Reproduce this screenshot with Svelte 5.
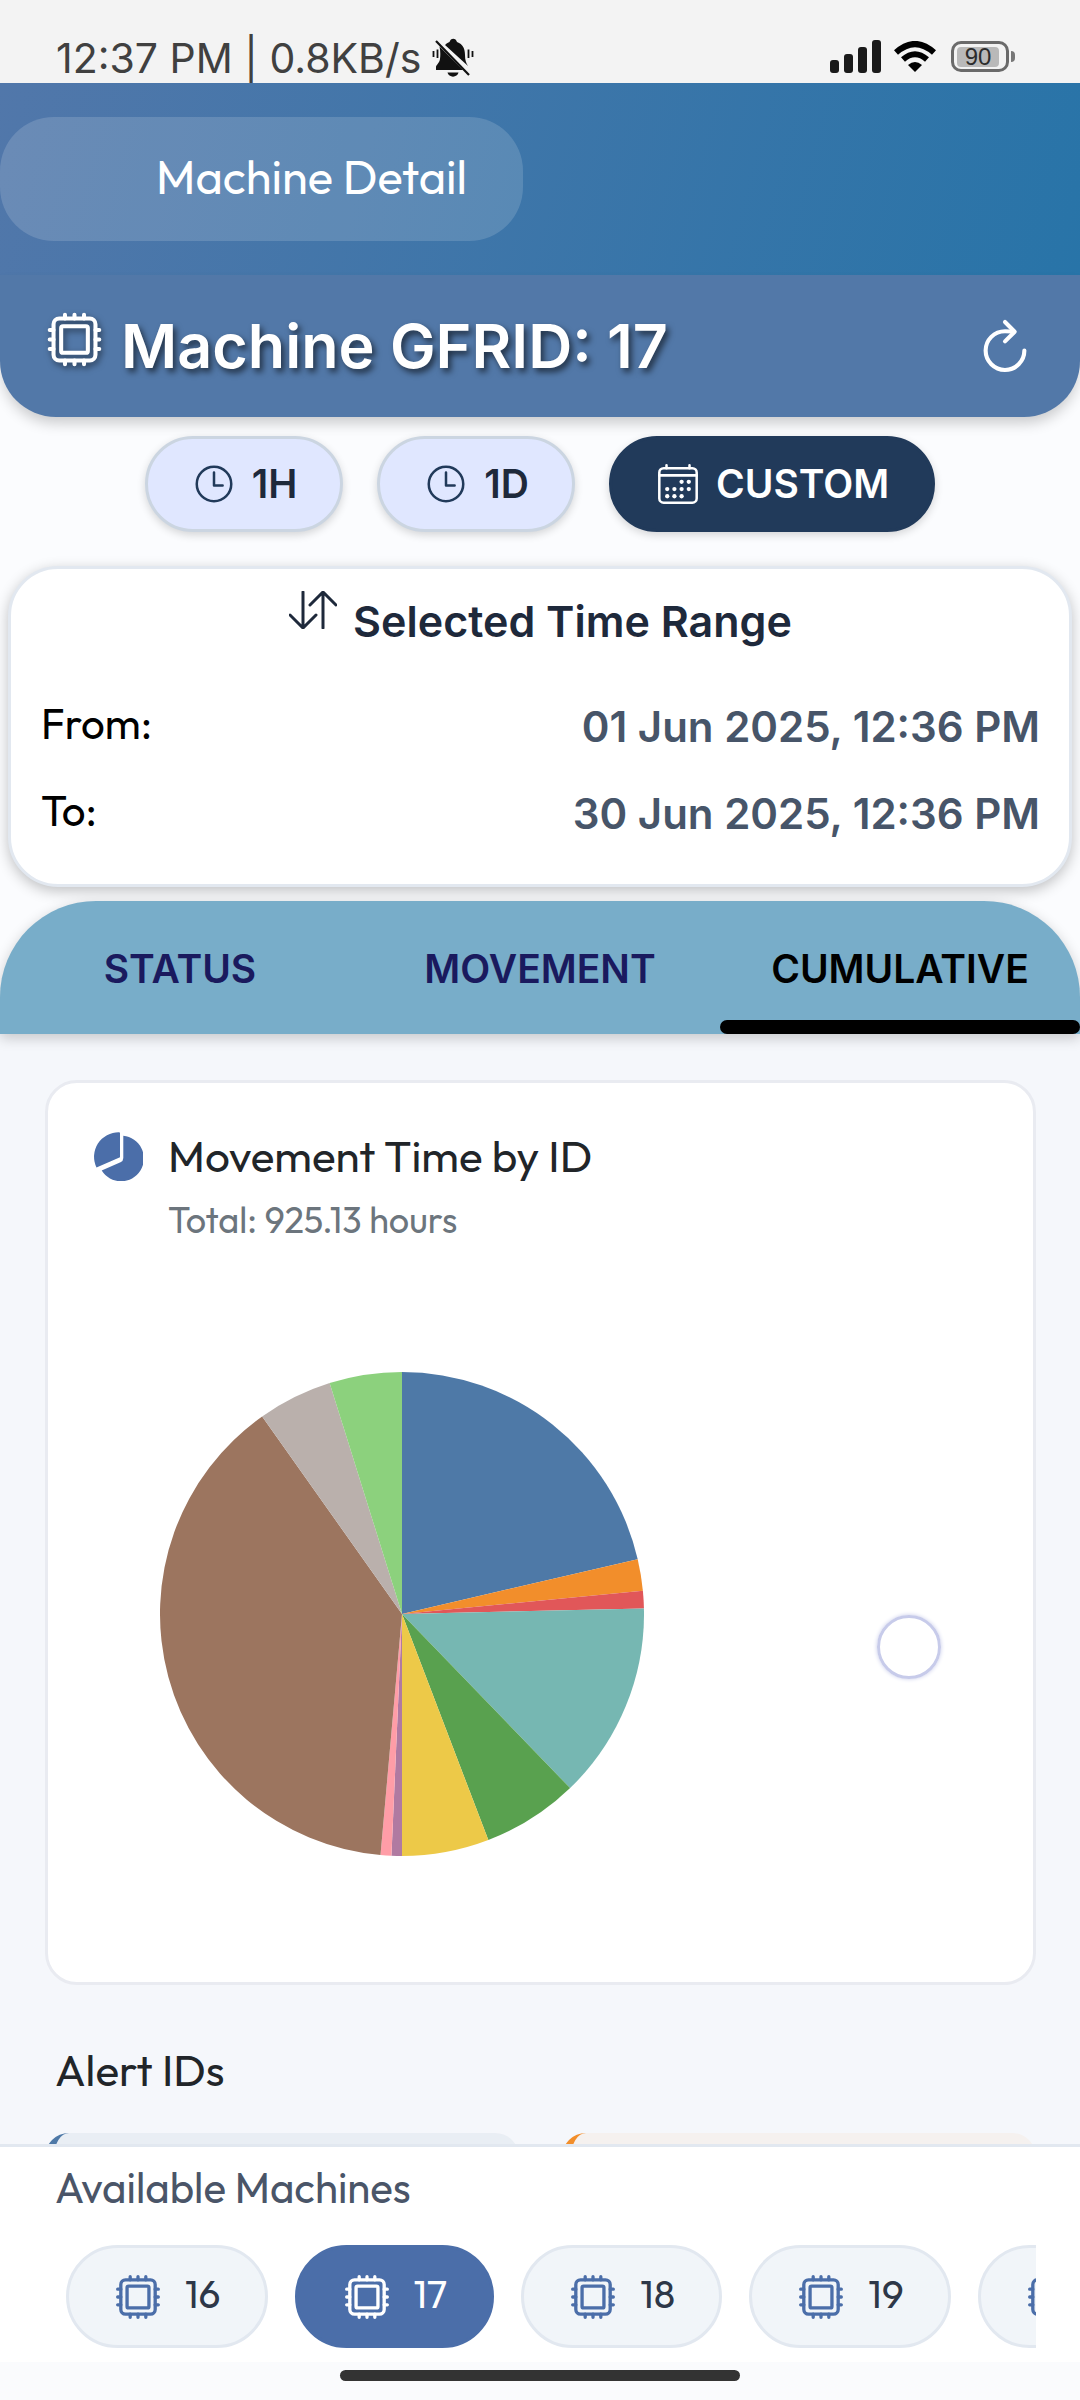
<script lang="ts">
  type Slice = { color: string; from: number; to: number };

  const slices: Slice[] = [
    { color: '#4e79a7', from: 0, to: 76.9 },
    { color: '#f28e2b', from: 76.9, to: 84.5 },
    { color: '#e15759', from: 84.5, to: 88.7 },
    { color: '#76b7b2', from: 88.7, to: 136 },
    { color: '#59a14f', from: 136, to: 159.1 },
    { color: '#edc948', from: 159.1, to: 180 },
    { color: '#b07aa1', from: 180, to: 182.5 },
    { color: '#ff9da7', from: 182.5, to: 185.1 },
    { color: '#9c755f', from: 185.1, to: 324.7 },
    { color: '#bab0ac', from: 324.7, to: 342.6 },
    { color: '#8cd17d', from: 342.6, to: 360 }
  ];

  function point(angle: number): string {
    const a = (angle * Math.PI) / 180;
    return `${(100 + 100 * Math.sin(a)).toFixed(3)} ${(100 - 100 * Math.cos(a)).toFixed(3)}`;
  }

  function wedge(s: Slice): string {
    const large = s.to - s.from > 180 ? 1 : 0;
    return `M100 100L${point(s.from)}A100 100 0 ${large} 1 ${point(s.to)}Z`;
  }

  const ranges = ['1H', '1D', 'CUSTOM'];
  const tabs = ['STATUS', 'MOVEMENT', 'CUMULATIVE'];
  const machines = ['16', '17', '18', '19', ''];

  let range = $state('CUSTOM');
  let tab = $state('CUMULATIVE');
  let machine = $state('17');
</script>

{#snippet chip()}
  <svg class="chip-icon" viewBox="0 0 512 512" aria-hidden="true">
    <rect x="80" y="80" width="352" height="352" rx="48" />
    <rect x="144" y="144" width="224" height="224" rx="16" />
    <path d="M256 80V48M336 80V48M176 80V48M256 464v-32M336 464v-32M176 464v-32M432 256h32M432 336h32M432 176h32M48 256h32M48 336h32M48 176h32" />
  </svg>
{/snippet}

<div class="screen">
  <div class="status-bar">
    <div class="status-left">
      <span>12:37 PM | 0.8KB/s</span>
      <svg class="bell" viewBox="0 0 42 40" aria-hidden="true">
        <path d="M4 32h27L7.500 8.500C8.500 13 8.500 17 8 21c-.5 4-4 6-4 8zM13 7c2-2 3-2.500 4.500-3 1-4.500 6.500-4.500 7.500 0 6 2 8 7 8 13 0 5 1 8 3 11z" />
        <path d="M15.500 34.500h11c-1 5.500-10 5.500-11 0z" />
        <path d="M4 3l33 34" fill="none" stroke="#111" stroke-width="2.200" />
        <path d="M1.500 13v6M5.500 11.500v8.500M36.500 11.500v8.500M40.500 13v6" fill="none" stroke="#111" stroke-width="1.800" />
      </svg>
    </div>
    <div class="status-right">
      <svg class="signal" viewBox="0 0 52 33" aria-hidden="true">
        <rect x="0" y="20" width="9" height="13" rx="3" />
        <rect x="14" y="14" width="9" height="19" rx="3" />
        <rect x="28" y="7" width="9" height="26" rx="3" />
        <rect x="42" y="0" width="9" height="33" rx="3" />
      </svg>
      <svg class="wifi" viewBox="0 0 42 31" aria-hidden="true">
        <path d="M2 11.500Q21-5.500 40 11.500" />
        <path d="M9 18.500Q21 8 33 18.500" />
        <path class="solid" d="M14 24Q21 18 28 24L21 31Z" />
      </svg>
      <div class="battery"><span>90</span></div>
    </div>
  </div>

  <header class="app-bar">
    <div class="app-title">Machine Detail</div>
  </header>

  <section class="machine-bar">
    <h1>{@render chip()}<span>Machine GFRID: 17</span></h1>
    <button class="refresh" aria-label="Refresh">
      <svg viewBox="0 0 512 512" aria-hidden="true">
        <path d="M320 146s24.360-12-64-12a160 160 0 1 0 160 160" />
        <path d="M256 58l80 80-80 80" />
      </svg>
    </button>
  </section>

  <main>
    <div class="ranges">
      {#each ranges as r}
        <button class="range" class:active={range === r} onclick={() => (range = r)}>
          {#if r === 'CUSTOM'}
            <svg viewBox="0 0 512 512" aria-hidden="true">
              <rect x="48" y="80" width="416" height="384" rx="48" />
              <path d="M128 48v32M384 48v32M464 160H48" />
              <g class="dots">
                <circle cx="296" cy="232" r="24" /><circle cx="376" cy="232" r="24" />
                <circle cx="136" cy="312" r="24" /><circle cx="216" cy="312" r="24" />
                <circle cx="296" cy="312" r="24" /><circle cx="376" cy="312" r="24" />
                <circle cx="136" cy="392" r="24" /><circle cx="216" cy="392" r="24" />
                <circle cx="296" cy="392" r="24" />
              </g>
            </svg>
          {:else}
            <svg viewBox="0 0 512 512" aria-hidden="true">
              <circle cx="256" cy="256" r="192" />
              <path d="M256 128v144h96" />
            </svg>
          {/if}
          <span>{r}</span>
        </button>
      {/each}
    </div>

    <section class="time-card">
      <h2>
        <svg viewBox="0 0 48 38" aria-hidden="true">
          <path d="M14 1v36M1 24l13 13 13-13M34 37V1M21 14L34 1l13 13" />
        </svg>
        <span>Selected Time Range</span>
      </h2>
      <dl>
        <div><dt>From:</dt><dd>01 Jun 2025, 12:36 PM</dd></div>
        <div><dt>To:</dt><dd>30 Jun 2025, 12:36 PM</dd></div>
      </dl>
    </section>

    <div class="tabs" role="tablist">
      {#each tabs as t}
        <button role="tab" class:active={tab === t} aria-selected={tab === t} onclick={() => (tab = t)}>{t}</button>
      {/each}
    </div>

    <div class="panel">
      <section class="chart-card">
        <div class="chart-head">
          <svg viewBox="0 0 49 49" aria-hidden="true">
            <path d="M25 0.300A24.500 24.500 0 0 0 2.500 35.500L26 25.200V1Q26 0.300 25 0.300Z" />
            <path d="M29.300 3.800A22.800 22.800 0 1 1 7.700 38.500L26.500 30.200Q29.300 29 29.300 26Z" />
          </svg>
          <h3>Movement Time by ID</h3>
          <p>Total: 925.13 hours</p>
        </div>
        <div class="chart-body">
          <svg class="pie" viewBox="0 0 200 200" role="img" aria-label="Movement time by ID">
            {#each slices as s}
              <path d={wedge(s)} fill={s.color} />
            {/each}
          </svg>
          <span class="ring"></span>
        </div>
      </section>

      <h3 class="alerts-title">Alert IDs</h3>
      <div class="alerts">
        <div class="alert blue"></div>
        <div class="alert orange"></div>
      </div>
    </div>
  </main>

  <footer>
    <h4>Available Machines</h4>
    <div class="machines">
      {#each machines as m}
        <button class:active={machine === m} aria-label={m ? `Machine ${m}` : 'Next machine'} onclick={() => (machine = m)}>
          {@render chip()}{#if m}<span>{m}</span>{/if}
        </button>
      {/each}
    </div>
  </footer>
  <div class="gesture"><span></span></div>
</div>

<style>
  :global(body) {
    margin: 0;
  }
  .screen {
    --ui: Inter, Roboto, sans-serif;
    --brand: Outfit, Lato, sans-serif;
    box-sizing: border-box;
    display: flex;
    flex-direction: column;
    height: 100vh;
    overflow: hidden;
    background: #fbfcfe;
    font-family: var(--brand);
    color: #212529;
  }
  .screen :global(*) {
    box-sizing: border-box;
  }
  h1, h2, h3, h4, p, dl, dd {
    margin: 0;
    font-weight: 400;
  }
  button {
    border: 0;
    margin: 0;
    padding: 0;
    background: none;
    font: inherit;
    color: inherit;
    cursor: pointer;
  }
  svg {
    display: block;
    flex: none;
  }

  .status-bar {
    flex: none;
    display: flex;
    justify-content: space-between;
    align-items: flex-end;
    height: 83px;
    padding: 0 64px 0 56px;
    background: #f3f3f3;
    color: #404040;
  }
  .status-left {
    display: flex;
    align-items: center;
    gap: 11px;
    height: 50px;
    font: 400 41px/50px var(--ui);
    white-space: nowrap;
  }
  .bell {
    width: 42px;
    height: 40px;
    fill: #111;
  }
  .status-right {
    display: flex;
    align-items: center;
    gap: 12px;
    height: 53px;
  }
  .signal {
    width: 52px;
    height: 33px;
    fill: #1a1a1a;
  }
  .wifi {
    width: 42px;
    height: 31px;
    fill: none;
    stroke: #000;
    stroke-width: 6;
  }
  .wifi .solid {
    fill: #000;
    stroke: none;
  }
  .battery {
    position: relative;
    width: 58px;
    height: 31px;
    margin-left: 3px;
    margin-right: 7px;
    padding: 3px;
    border: 3px solid #6a6a6a;
    border-radius: 10px;
  }
  .battery::after {
    content: '';
    position: absolute;
    right: -9px;
    top: 7px;
    width: 4px;
    height: 11px;
    border-radius: 0 6px 6px 0;
    background: #777;
  }
  .battery span {
    display: block;
    width: 42px;
    border-radius: 4px;
    background: #b9b9b9;
    color: #2c2c2c;
    font: 400 24px/20px "Liberation Sans", sans-serif;
    text-align: center;
  }

  .app-bar {
    flex: none;
    padding: 34px 0;
    background: linear-gradient(105deg, #5177aa 0%, #2874a8 100%);
  }
  .app-title {
    width: fit-content;
    padding: 0 56px 4px 156px;
    border-radius: 54px;
    background: rgba(255, 255, 255, 0.15);
    color: #fff;
    font-size: 47px;
    line-height: 120px;
  }

  .machine-bar {
    flex: none;
    position: relative;
    display: flex;
    justify-content: space-between;
    align-items: center;
    height: 142px;
    padding: 0 44px;
    border-radius: 0 0 56px 56px;
    background: #5278a8;
    box-shadow: 0 8px 14px -2px rgba(0, 0, 0, 0.2);
    color: #fff;
  }
  h1 {
    display: flex;
    align-items: center;
    gap: 16px;
    font: 600 61px/76px var(--ui);
    text-shadow: 3px 4px 6px rgba(0, 0, 0, 0.6);
  }
  .chip-icon {
    width: 50px;
    height: 50px;
    fill: none;
    stroke: currentColor;
    stroke-width: 34;
    stroke-linecap: round;
    stroke-linejoin: round;
  }
  h1 .chip-icon {
    width: 61px;
    height: 61px;
    margin-bottom: 14px;
    filter: drop-shadow(2px 3px 3px rgba(0, 0, 0, 0.5));
  }
  .refresh svg {
    width: 62px;
    height: 62px;
    fill: none;
    stroke: #fff;
    stroke-width: 34;
    stroke-linecap: round;
    stroke-linejoin: round;
  }

  main {
    flex: 1;
    min-height: 0;
    overflow: hidden;
    display: flex;
    flex-direction: column;
  }
  .ranges {
    flex: none;
    display: flex;
    justify-content: center;
    gap: 34px;
    padding: 19px 0 34px;
  }
  .range {
    display: flex;
    align-items: center;
    gap: 15px;
    height: 96px;
    padding: 0 43px;
    border: 3px solid #cbd5e1;
    border-radius: 48px;
    background: #e0e7ff;
    box-shadow: 0 3px 8px rgba(0, 0, 0, 0.16);
    color: #1e293b;
    font: 600 39px/50px var(--ui);
  }
  .range svg {
    width: 46px;
    height: 46px;
    fill: none;
    stroke: #213a5a;
    stroke-width: 28;
    stroke-linecap: round;
    stroke-linejoin: round;
  }
  .range.active {
    border-color: #213a5a;
    background: #213a5a;
    color: #fff;
  }
  .range.active svg {
    stroke: #fff;
  }
  .range .dots {
    fill: #fff;
    stroke: none;
  }

  .time-card {
    flex: none;
    margin: 0 8px;
    padding: 22px 29px 27px 30px;
    border: 3px solid #e2e8f0;
    border-radius: 50px;
    background: #fff;
    box-shadow: 0 4px 14px rgba(0, 0, 0, 0.24);
  }
  h2 {
    display: flex;
    justify-content: center;
    align-items: center;
    gap: 16px;
    height: 60px;
    color: #1e293b;
    font: 600 43px/60px var(--ui);
  }
  h2 svg {
    width: 48px;
    height: 38px;
    margin-bottom: 23px;
    fill: none;
    stroke: #1e293b;
    stroke-width: 3;
    stroke-linecap: round;
    stroke-linejoin: round;
  }
  dl {
    padding-top: 32px;
  }
  dl div {
    display: flex;
    justify-content: space-between;
    align-items: center;
    height: 87px;
  }
  dt {
    margin-bottom: 6px;
    color: #000;
    font-size: 42px;
    line-height: 60px;
  }
  dd {
    color: #475569;
    font: 600 42px/60px var(--ui);
  }

  .tabs {
    flex: none;
    position: relative;
    display: grid;
    grid-template-columns: repeat(3, 1fr);
    height: 133px;
    margin-top: 14px;
    overflow: hidden;
    border-radius: 96px 96px 0 0;
    background: #78adc9;
    box-shadow: 0 4px 14px rgba(0, 0, 0, 0.2);
  }
  .tabs button {
    position: relative;
    padding-top: 2px;
    color: #1a1a5e;
    font: 600 39px/50px var(--ui);
  }
  .tabs .active {
    color: #000;
  }
  .tabs .active::after {
    content: '';
    position: absolute;
    inset: auto 0 0;
    height: 14px;
    border-radius: 7px;
    background: #000;
  }

  .panel {
    flex: 1;
    min-height: 0;
    padding: 46px 44px 0 45px;
    background: #f5f7fb;
  }
  .chart-card {
    padding: 41px 46px 126px;
    border: 3px solid #e9ebf1;
    border-radius: 32px;
    background: #fff;
  }
  .chart-head {
    display: grid;
    grid-template-columns: 48px 1fr;
    column-gap: 26px;
    align-items: center;
  }
  .chart-head svg {
    width: 49px;
    height: 49px;
    fill: #4b6ea9;
  }
  h3 {
    font-size: 44px;
    line-height: 64px;
  }
  .chart-head p {
    grid-column: 2;
    color: #6c757d;
    font-size: 36px;
    line-height: 64px;
  }
  .chart-body {
    display: flex;
    justify-content: space-between;
    align-items: center;
    padding: 120px 46px 0 66px;
  }
  .pie {
    width: 484px;
    height: 484px;
  }
  .ring {
    width: 64px;
    height: 64px;
    margin-top: 66px;
    border: 3px solid #c7cbea;
    border-radius: 50%;
    box-shadow: 0 0 4px #c7cbea;
  }
  .alerts-title {
    margin: 53px 10px 31px;
  }
  .alerts {
    display: grid;
    grid-template-columns: 1fr 1fr;
    gap: 43px;
  }
  .alert {
    height: 160px;
    border-left: 9px solid;
    border-radius: 24px;
  }
  .blue {
    border-color: #4e79a7;
    background: #e9eef4;
  }
  .orange {
    border-color: #f28e2b;
    background: #f5f1ef;
  }

  footer {
    flex: none;
    padding: 11px 44px 14px;
    border-top: 3px solid #e2e8f0;
    background: #fff;
  }
  h4 {
    padding: 0 11px;
    color: #4a5568;
    font-size: 42px;
    line-height: 60px;
  }
  .machines {
    display: flex;
    gap: 27px;
    margin-top: 27px;
    padding-left: 22px;
    overflow: hidden;
  }
  .machines button {
    flex: none;
    display: flex;
    align-items: center;
    gap: 22px;
    height: 103px;
    padding: 0 44px;
    border: 3px solid #e2e8f0;
    border-radius: 52px;
    background: #f1f5f9;
    color: #2d3748;
    font-size: 39px;
  }
  .machines span {
    padding-bottom: 6px;
  }
  .machines .chip-icon {
    color: #4b6ea9;
  }
  .machines .active {
    border-color: #4b6ea9;
    background: #4b6ea9;
    color: #fff;
  }
  .machines .active .chip-icon {
    color: #fff;
  }
  .gesture {
    flex: none;
    display: flex;
    justify-content: center;
    height: 38px;
    padding-top: 8px;
    background: #fafbfd;
  }
  .gesture span {
    width: 37%;
    height: 11px;
    border-radius: 6px;
    background: #333;
  }
</style>
